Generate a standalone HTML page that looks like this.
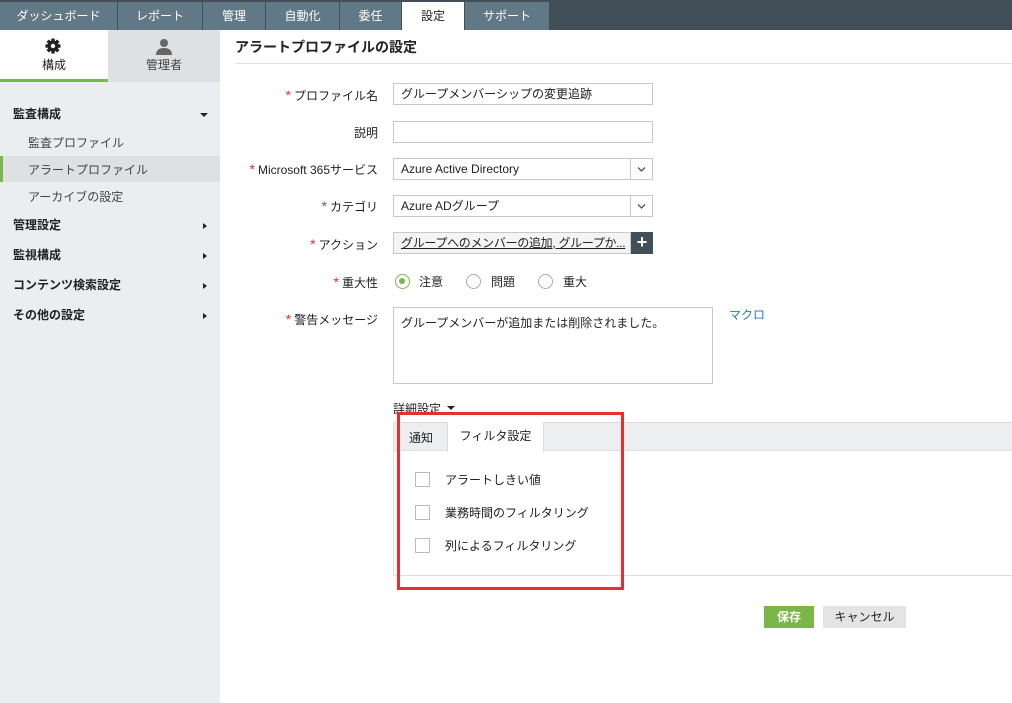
<!DOCTYPE html>
<html><head><meta charset="utf-8"><style>
*{box-sizing:border-box;margin:0;padding:0}
body{width:1012px;height:703px;position:relative;background:#fff;font-family:"Liberation Sans","Noto Sans CJK JP",sans-serif;font-size:12px;color:#222;overflow:hidden}
.abs{position:absolute}
.top{left:0;top:0;width:1012px;height:30px;background:#434f58}
.tab{position:absolute;top:2px;height:28px;background:#617886;color:#fff;font-size:12px;line-height:28px;text-align:center}
.tab.on{background:#fff;color:#222}
.side{left:0;top:30px;width:220px;height:673px;background:#ebeef0}
.lbl{position:absolute;right:634px;text-align:right;font-size:12px;white-space:nowrap}
.lbl b{color:#e53030;font-weight:normal;font-size:14px;margin-right:3px}
.inp{position:absolute;left:393px;width:260px;height:22px;border:1px solid #c8c8c8;background:#fff;font-size:12px;line-height:20px;padding-left:7px;white-space:nowrap;overflow:hidden}
.sel .arr{position:absolute;right:0;top:0;width:22px;height:20px;border-left:1px solid #c8c8c8;background:#fff}
.rad{position:absolute;width:15px;height:15px;border:1.5px solid #aaa;border-radius:50%}
.cb{position:absolute;left:415px;width:15px;height:15px;border:1px solid #bbb;background:#fff}
.si{position:absolute;left:13px;font-weight:bold;font-size:12px}
.ss{position:absolute;left:28px;font-size:12px;color:#444}
.tri{position:absolute;left:203px;width:0;height:0;border-top:3.5px solid transparent;border-bottom:3.5px solid transparent;border-left:4px solid #222}
</style></head><body>
<div class="abs top"></div>
<div class="tab" style="left:0;width:117px">ダッシュボード</div>
<div class="tab" style="left:118px;width:84px">レポート</div>
<div class="tab" style="left:203px;width:62px">管理</div>
<div class="tab" style="left:266px;width:73px">自動化</div>
<div class="tab" style="left:340px;width:61px">委任</div>
<div class="tab on" style="left:402px;width:62px">設定</div>
<div class="tab" style="left:465px;width:84px">サポート</div>

<div class="abs side"></div>
<div class="abs" style="left:0;top:30px;width:108px;height:49px;background:#fff"></div>
<div class="abs" style="left:0;top:79px;width:108px;height:3px;background:#7ab648"></div>
<div class="abs" style="left:108px;top:30px;width:112px;height:52px;background:#dfe0e2"></div>
<svg class="abs" style="left:45px;top:38px" width="16" height="16" viewBox="0 0 16 16"><g fill="#222"><circle cx="8" cy="8" r="5.5"/><rect x="6.3" y="0.5" width="3.4" height="15"/><rect x="0.5" y="6.3" width="15" height="3.4"/><rect x="6.3" y="0.5" width="3.4" height="15" transform="rotate(45 8 8)"/><rect x="6.3" y="0.5" width="3.4" height="15" transform="rotate(-45 8 8)"/></g><circle cx="8" cy="8" r="2.2" fill="#fff"/></svg>
<div class="abs" style="left:0;width:108px;top:56px;text-align:center;font-size:12px">構成</div>
<svg class="abs" style="left:155px;top:38px" width="18" height="17" viewBox="0 0 18 17"><circle cx="9" cy="5" r="4" fill="#666"/><path d="M1 17c0-5 3-7 8-7s8 2 8 7z" fill="#666"/></svg>
<div class="abs" style="left:108px;width:112px;top:56px;text-align:center;font-size:12px;color:#444">管理者</div>

<div class="si" style="top:105px">監査構成</div>
<div class="abs" style="left:200px;top:113px;border-left:4px solid transparent;border-right:4px solid transparent;border-top:4px solid #222"></div>
<div class="ss" style="top:134px">監査プロファイル</div>
<div class="abs" style="left:0;top:156px;width:220px;height:26px;background:#dfe0e2"></div>
<div class="abs" style="left:0;top:156px;width:3px;height:26px;background:#7ab648"></div>
<div class="ss" style="top:161px">アラートプロファイル</div>
<div class="ss" style="top:188px">アーカイブの設定</div>
<div class="si" style="top:216px">管理設定</div><div class="tri" style="top:223px"></div>
<div class="si" style="top:246px">監視構成</div><div class="tri" style="top:253px"></div>
<div class="si" style="top:276px">コンテンツ検索設定</div><div class="tri" style="top:283px"></div>
<div class="si" style="top:306px">その他の設定</div><div class="tri" style="top:313px"></div>

<div class="abs" style="left:235px;top:37px;font-size:14px;font-weight:bold">アラートプロファイルの設定</div>
<div class="abs" style="left:235px;top:63px;width:777px;height:1px;background:#e0e0e0"></div>

<div class="lbl" style="top:87px"><b>*</b>プロファイル名</div>
<div class="inp" style="top:83px">グループメンバーシップの変更追跡</div>
<div class="lbl" style="top:124px">説明</div>
<div class="inp" style="top:121px"></div>
<div class="lbl" style="top:161px"><b>*</b>Microsoft 365サービス</div>
<div class="inp sel" style="top:158px">Azure Active Directory<div class="arr"><svg width="21" height="20" viewBox="0 0 21 20"><path d="M7 8.5l3.5 3.5 3.5-3.5" fill="none" stroke="#555" stroke-width="1.3"/></svg></div></div>
<div class="lbl" style="top:198px"><b>*</b>カテゴリ</div>
<div class="inp sel" style="top:195px">Azure ADグループ<div class="arr"><svg width="21" height="20" viewBox="0 0 21 20"><path d="M7 8.5l3.5 3.5 3.5-3.5" fill="none" stroke="#555" stroke-width="1.3"/></svg></div></div>
<div class="lbl" style="top:236px"><b>*</b>アクション</div>
<div class="inp" style="top:232px;width:238px;background:#f4f4f4;letter-spacing:-0.3px"><u>グループへのメンバーの追加, グループか...</u></div>
<div class="abs" style="left:631px;top:232px;width:22px;height:22px;background:#434f58;color:#fff;font-size:18px;font-weight:bold;line-height:21px;text-align:center">+</div>
<div class="lbl" style="top:274px"><b>*</b>重大性</div>
<div class="rad" style="left:395px;top:274px;border-color:#7ab648"><div style="position:absolute;left:3px;top:3px;width:6px;height:6px;border-radius:50%;background:#7ab648"></div></div>
<div class="abs" style="left:419px;top:273px">注意</div>
<div class="rad" style="left:466px;top:274px"></div>
<div class="abs" style="left:491px;top:273px">問題</div>
<div class="rad" style="left:538px;top:274px"></div>
<div class="abs" style="left:563px;top:273px">重大</div>
<div class="lbl" style="top:311px"><b>*</b>警告メッセージ</div>
<div class="inp" style="top:307px;width:320px;height:77px;padding-top:5px">グループメンバーが追加または削除されました。</div>
<div class="abs" style="left:729px;top:306px;color:#2a7bbf">マクロ</div>

<div class="abs" style="left:393px;top:400px">詳細設定</div>
<div class="abs" style="left:447px;top:406px;border-left:4px solid transparent;border-right:4px solid transparent;border-top:4px solid #222"></div>
<div class="abs" style="left:393px;top:422px;width:619px;height:29px;background:#eceef0;border-top:1px solid #ddd;border-bottom:1px solid #ddd"></div>
<div class="abs" style="left:393px;top:422px;width:1px;height:154px;background:#ddd"></div>
<div class="abs" style="left:393px;top:575px;width:619px;height:1px;background:#ddd"></div>
<div class="abs" style="left:409px;top:429px">通知</div>
<div class="abs" style="left:447px;top:422px;width:97px;height:30px;background:#fff;border-left:1px solid #ddd;border-right:1px solid #ddd;text-align:center;line-height:28px">フィルタ設定</div>
<div class="cb" style="top:472px"></div><div class="abs" style="left:445px;top:471px">アラートしきい値</div>
<div class="cb" style="top:505px"></div><div class="abs" style="left:445px;top:504px">業務時間のフィルタリング</div>
<div class="cb" style="top:538px"></div><div class="abs" style="left:445px;top:537px">列によるフィルタリング</div>
<div class="abs" style="left:397px;top:412px;width:227px;height:178px;border:3px solid #e53030"></div>

<div class="abs" style="left:764px;top:606px;width:50px;height:22px;background:#7ab648;color:#fff;text-align:center;line-height:22px;font-weight:bold">保存</div>
<div class="abs" style="left:823px;top:606px;width:83px;height:22px;background:#e4e4e4;text-align:center;line-height:22px">キャンセル</div>
</body></html>
